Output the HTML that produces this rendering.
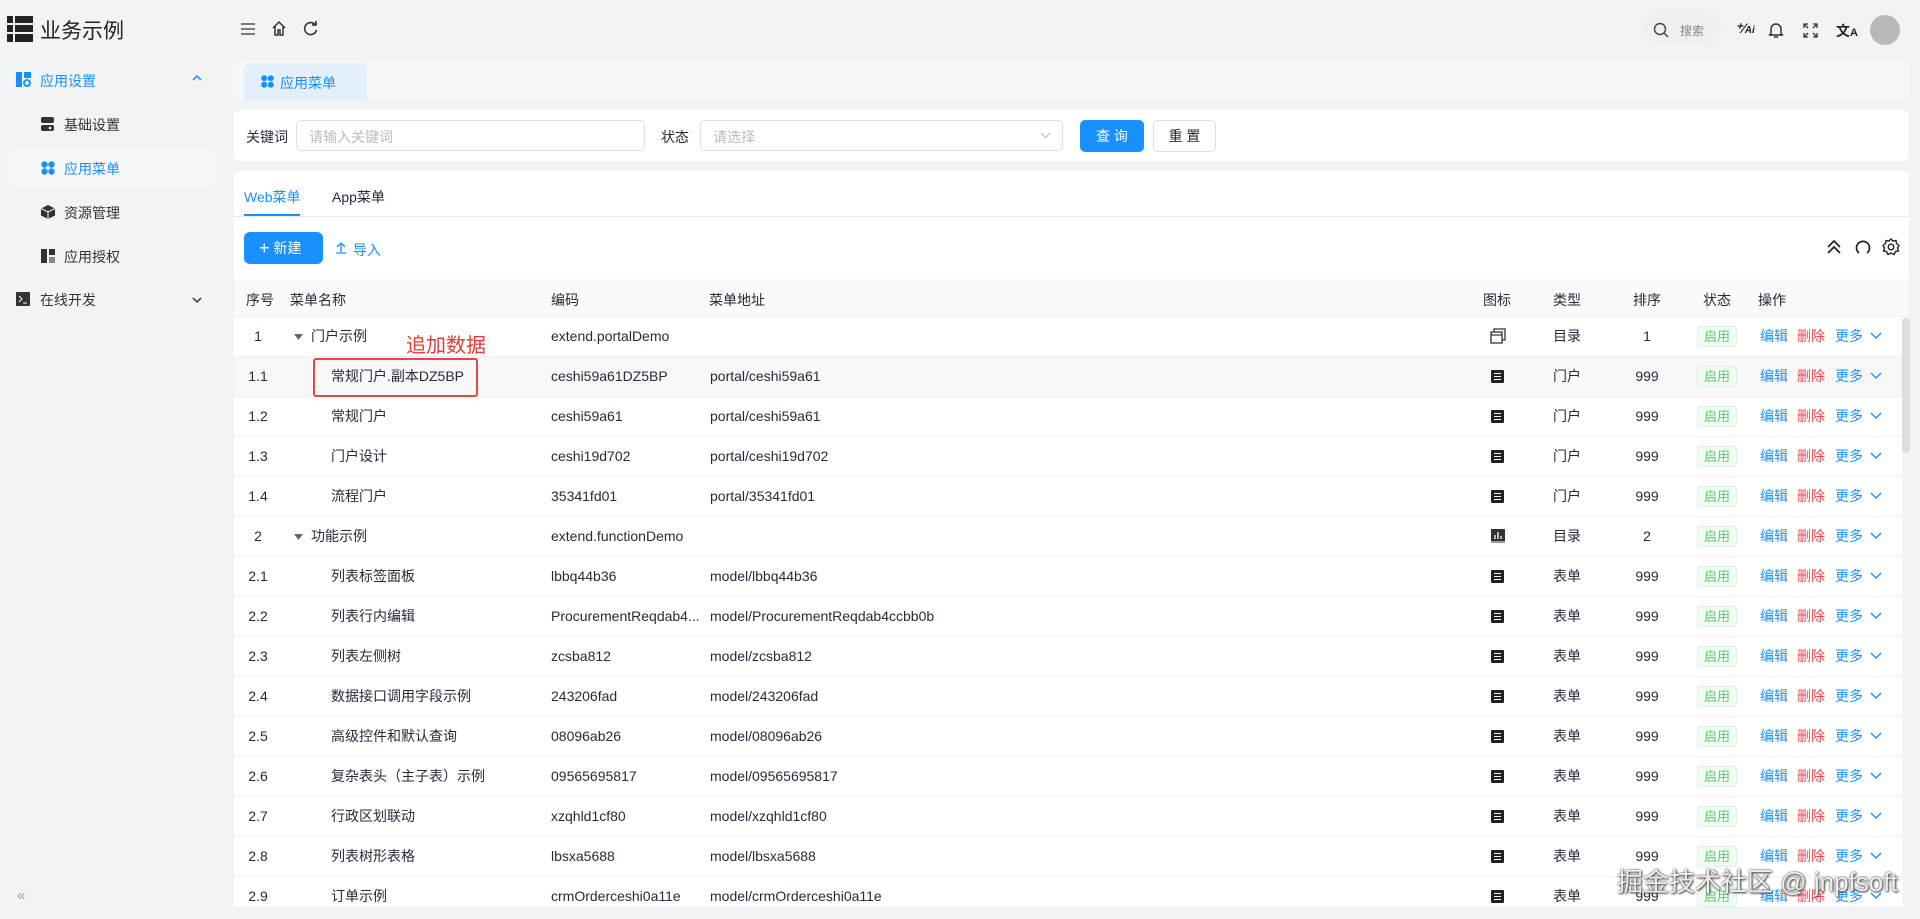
<!DOCTYPE html>
<html><head><meta charset="utf-8"><style>
*{box-sizing:border-box;margin:0;padding:0}
body{width:1920px;height:919px;overflow:hidden;background:#f2f3f5;font-family:"Liberation Sans","Noto Sans CJK SC",sans-serif;font-size:14px;color:#252b3a;position:relative}
.a{position:absolute;white-space:nowrap}
.side{color:#333;font-size:14px}
.blue{color:#1890ff}
.row{position:absolute;left:234px;width:1668px;height:40px;border-bottom:1px solid #eceef1;background:#fff}
.row .a{top:11px;line-height:16px}
.tag{position:absolute;left:1463px;top:9px;width:40px;height:21px;background:#f0fbf2;border:1px solid #d8f3de;border-radius:4px;color:#5cc870;font-size:13px;text-align:center;line-height:19px}
.ic{position:absolute;left:1257px;top:13px;width:13px;height:13px;background:#222;border-radius:1px}
.ic i{position:absolute;left:3px;width:7px;height:1px;background:#fff}
</style></head><body>
<svg class="a" style="left:7px;top:16px" width="26" height="26" viewBox="0 0 26 26"><g fill="#222"><rect x="0" y="0" width="6" height="7"/><rect x="8" y="0" width="18" height="7"/><rect x="0" y="9" width="6" height="7"/><rect x="8" y="9" width="18" height="7"/><rect x="0" y="18" width="6" height="8"/><rect x="8" y="18" width="18" height="8"/></g></svg>
<div class="a" style="left:40px;top:15px;font-size:21px;color:#222">业务示例</div>
<svg class="a" style="left:16px;top:72px" width="15" height="15"><rect x="0" y="0" width="6" height="15" fill="#1890ff"/><rect x="8" y="0" width="7" height="6" fill="#1890ff"/><circle cx="11" cy="11" r="3" fill="none" stroke="#1890ff" stroke-width="2"/></svg>
<div class="a blue" style="left:40px;top:71px">应用设置</div>
<svg class="a" style="left:192px;top:74px" width="10" height="8"><path d="M1 6L5 2L9 6" fill="none" stroke="#1890ff" stroke-width="1.5"/></svg>
<svg class="a" style="left:41px;top:117px" width="13" height="14"><rect x="0" y="0" width="13" height="6" rx="2" fill="#333"/><rect x="0" y="8" width="13" height="6" rx="2" fill="#333"/><circle cx="9" cy="11" r="1.3" fill="#fff"/></svg>
<div class="a side" style="left:64px;top:115px">基础设置</div>
<div class="a" style="left:9px;top:147px;width:205px;height:41px;background:#f6f7f9;border-radius:6px"></div>
<svg class="a" style="left:41px;top:161px" width="14" height="14"><g fill="#1890ff"><circle cx="3.5" cy="3.5" r="3.2"/><circle cx="10.5" cy="3.5" r="3.2"/><circle cx="3.5" cy="10.5" r="3.2"/><circle cx="10.5" cy="10.5" r="3.2"/></g></svg>
<div class="a blue" style="left:64px;top:159px">应用菜单</div>
<svg class="a" style="left:41px;top:205px" width="14" height="14"><path d="M7 0L14 3.5V10.5L7 14L0 10.5V3.5Z" fill="#333"/><path d="M0 3.5L7 7L14 3.5M7 7V14" stroke="#fff" fill="none"/></svg>
<div class="a side" style="left:64px;top:203px">资源管理</div>
<svg class="a" style="left:41px;top:249px" width="14" height="14"><rect x="0" y="0" width="6" height="14" fill="#333"/><rect x="8" y="0" width="6" height="6" fill="#333"/><rect x="8" y="8" width="6" height="6" fill="#888"/></svg>
<div class="a side" style="left:64px;top:247px">应用授权</div>
<svg class="a" style="left:16px;top:292px" width="14" height="14"><rect x="0" y="0" width="14" height="14" rx="1" fill="#333"/><path d="M3 4L6 7L3 10M7 11H11" stroke="#fff" fill="none"/></svg>
<div class="a side" style="left:40px;top:290px">在线开发</div>
<svg class="a" style="left:192px;top:296px" width="10" height="8"><path d="M1 2L5 6L9 2" fill="none" stroke="#333" stroke-width="1.5"/></svg>
<div class="a" style="left:17px;top:887px;color:#999;font-size:15px">«</div>
<svg class="a" style="left:241px;top:23px" width="14" height="12"><path d="M0 1H14M0 6H14M0 11H14" stroke="#555" stroke-width="1.5"/></svg>
<svg class="a" style="left:271px;top:20px" width="16" height="16"><path d="M2 8L8 2L14 8M4 6V15H7V10H9V15H12V6" fill="none" stroke="#333" stroke-width="1.5"/></svg>
<svg class="a" style="left:303px;top:21px" width="15" height="15"><path d="M12.5 4A6 6 0 1 0 13.5 9" fill="none" stroke="#333" stroke-width="1.6"/><path d="M9 4H13V0" fill="none" stroke="#333" stroke-width="1.6"/></svg>
<div class="a" style="left:1643px;top:12px;width:78px;height:34px;border-radius:17px;background:#eff0f2"></div>
<svg class="a" style="left:1653px;top:22px" width="16" height="16"><circle cx="7" cy="7" r="5.5" fill="none" stroke="#444" stroke-width="1.4"/><path d="M11 11L15 15" stroke="#444" stroke-width="1.4"/></svg>
<div class="a" style="left:1680px;top:22px;font-size:12px;color:#888">搜索</div>
<div class="a" style="left:1735px;top:20px;font-size:14px;color:#222;font-style:italic;font-weight:bold">⁺⁄<span style="font-size:10px">Ai</span></div>
<svg class="a" style="left:1768px;top:21px" width="16" height="18"><path d="M3 13V8A5 5 0 0 1 13 8V13L15 14H1Z" fill="none" stroke="#333" stroke-width="1.5"/><path d="M6 16H10" stroke="#333" stroke-width="1.5"/></svg>
<svg class="a" style="left:1803px;top:23px" width="15" height="15"><path d="M1 5V1H5M10 1H14V5M14 10V14H10M5 14H1V10M1 1L5 5M14 1L10 5M14 14L10 10M1 14L5 10" fill="none" stroke="#333" stroke-width="1.3"/></svg>
<div class="a" style="left:1836px;top:21px;font-size:14px;font-weight:bold;color:#222">文<span style="font-size:11px">A</span></div>
<div class="a" style="left:1870px;top:15px;width:30px;height:30px;border-radius:50%;background:#b8b8b8"></div>
<div class="a" style="left:234px;top:60px;width:1675px;height:40px;background:#f6f7f9"></div>
<div class="a" style="left:244px;top:63px;width:123px;height:37px;background:#e3effb;border-radius:8px 8px 0 0"></div>
<svg class="a" style="left:261px;top:75px" width="13" height="13"><g fill="#1890ff"><circle cx="3.2" cy="3.2" r="3"/><circle cx="9.8" cy="3.2" r="3"/><circle cx="3.2" cy="9.8" r="3"/><circle cx="9.8" cy="9.8" r="3"/></g></svg>
<div class="a blue" style="left:280px;top:73px;font-size:14px">应用菜单</div>
<div class="a" style="left:234px;top:110px;width:1675px;height:51px;background:#fff;border-radius:6px"></div>
<div class="a" style="left:246px;top:127px">关键词</div>
<div class="a" style="left:296px;top:120px;width:349px;height:31px;border:1px solid #dcdfe6;border-radius:5px"></div>
<div class="a" style="left:309px;top:127px;color:#bbb">请输入关键词</div>
<div class="a" style="left:661px;top:127px">状态</div>
<div class="a" style="left:700px;top:120px;width:363px;height:31px;border:1px solid #dcdfe6;border-radius:5px"></div>
<div class="a" style="left:713px;top:127px;color:#bbb">请选择</div>
<svg class="a" style="left:1040px;top:132px" width="11" height="7"><path d="M1 1L5.5 5.5L10 1" fill="none" stroke="#bbb" stroke-width="1.2"/></svg>
<div class="a" style="left:1080px;top:120px;width:64px;height:32px;background:#1890ff;border-radius:5px;color:#fff;text-align:center;line-height:32px">查 询</div>
<div class="a" style="left:1153px;top:120px;width:63px;height:32px;border:1px solid #dcdfe6;border-radius:5px;text-align:center;line-height:30px">重 置</div>
<div class="a" style="left:234px;top:171px;width:1675px;height:737px;background:#fff;border-radius:6px"></div>
<div class="a blue" style="left:244px;top:187px">Web菜单</div>
<div class="a" style="left:332px;top:187px">App菜单</div>
<div class="a" style="left:234px;top:216px;width:1675px;height:1px;background:#e5e7eb"></div>
<div class="a" style="left:244px;top:214px;width:56px;height:2px;background:#1890ff"></div>
<div class="a" style="left:244px;top:232px;width:79px;height:32px;background:#1890ff;border-radius:6px;color:#fff;line-height:32px;padding-left:15px"><span style="font-size:18px;vertical-align:-1px">+</span> 新建</div>
<svg class="a" style="left:335px;top:241px" width="12" height="13"><path d="M6 11V2M2 6L6 2L10 6M1 12H11" fill="none" stroke="#1890ff" stroke-width="1.3"/></svg>
<div class="a blue" style="left:353px;top:240px">导入</div>
<svg class="a" style="left:1826px;top:240px" width="16" height="14"><path d="M2 7L8 1L14 7M2 13L8 7L14 13" fill="none" stroke="#222" stroke-width="1.7"/></svg>
<svg class="a" style="left:1855px;top:239px" width="16" height="16"><path d="M4 14A6.5 6.5 0 1 1 12 14" fill="none" stroke="#222" stroke-width="1.7"/></svg>
<svg class="a" style="left:1882px;top:238px" width="18" height="18" viewBox="0 0 18 18"><path d="M9 1L11 3L14 2.5L14.5 5.5L17 7.5L15.5 10L16.5 13L13.5 13.5L12 16.5L9 15L6 16.5L4.5 13.5L1.5 13L2.5 10L1 7.5L3.5 5.5L4 2.5L7 3Z" fill="none" stroke="#222" stroke-width="1.4"/><circle cx="9" cy="9" r="2.8" fill="none" stroke="#222" stroke-width="1.4"/></svg>
<div class="a" style="left:234px;top:279px;width:1675px;height:38px;background:#fafafa;border-bottom:1px solid #eceef1"></div>
<div class="a" style="left:246px;top:290px">序号</div>
<div class="a" style="left:290px;top:290px">菜单名称</div>
<div class="a" style="left:551px;top:290px">编码</div>
<div class="a" style="left:709px;top:290px">菜单地址</div>
<div class="a" style="left:1483px;top:290px">图标</div>
<div class="a" style="left:1553px;top:290px">类型</div>
<div class="a" style="left:1633px;top:290px">排序</div>
<div class="a" style="left:1703px;top:290px">状态</div>
<div class="a" style="left:1758px;top:290px">操作</div>
<div id="rows"></div>
<div class="a" style="left:1902px;top:318px;width:8px;height:590px;background:#f4f4f5"></div>
<div class="a" style="left:1902px;top:318px;width:8px;height:135px;background:#dcdde0;border-radius:4px"></div>
<script>
var d=[["1","门户示例","extend.portalDemo","","d","目录","1",1],
["1.1","常规门户.副本DZ5BP","ceshi59a61DZ5BP","portal/ceshi59a61","l","门户","999"],
["1.2","常规门户","ceshi59a61","portal/ceshi59a61","l","门户","999"],
["1.3","门户设计","ceshi19d702","portal/ceshi19d702","l","门户","999"],
["1.4","流程门户","35341fd01","portal/35341fd01","l","门户","999"],
["2","功能示例","extend.functionDemo","","c","目录","2",1],
["2.1","列表标签面板","lbbq44b36","model/lbbq44b36","l","表单","999"],
["2.2","列表行内编辑","ProcurementReqdab4...","model/ProcurementReqdab4ccbb0b","l","表单","999"],
["2.3","列表左侧树","zcsba812","model/zcsba812","l","表单","999"],
["2.4","数据接口调用字段示例","243206fad","model/243206fad","l","表单","999"],
["2.5","高级控件和默认查询","08096ab26","model/08096ab26","l","表单","999"],
["2.6","复杂表头（主子表）示例","09565695817","model/09565695817","l","表单","999"],
["2.7","行政区划联动","xzqhld1cf80","model/xzqhld1cf80","l","表单","999"],
["2.8","列表树形表格","lbsxa5688","model/lbsxa5688","l","表单","999"],
["2.9","订单示例","crmOrderceshi0a11e","model/crmOrderceshi0a11e","l","表单","999"]];
var h="";
d.forEach(function(r,i){
var top=317+i*40;var hgt=i==14?31:40;
var ic=r[4]=="l"?'<div class="ic"><i style="top:3px"></i><i style="top:6px"></i><i style="top:9px"></i></div>':
r[4]=="c"?'<svg class="a" style="left:1257px;top:12px" width="14" height="14"><rect width="14" height="12" fill="#333"/><path d="M4 10V6M7 10V3M10 10V7" stroke="#fff" stroke-width="1.3"/><rect y="12" width="14" height="2" fill="#999"/></svg>':
'<svg class="a" style="left:1256px;top:11px" width="16" height="16"><rect x="1" y="4" width="11" height="11" fill="none" stroke="#333" stroke-width="1.3"/><path d="M1 7H12M4 4V1H15V12H12" fill="none" stroke="#333" stroke-width="1.3"/></svg>';
h+='<div class="row" style="top:'+top+'px;height:'+hgt+'px;overflow:hidden;'+(i==1?'background:#f8f8f9':'')+'">'+
'<div class="a" style="left:0;width:48px;text-align:center">'+r[0]+'</div>'+
(r[7]?'<svg class="a" style="left:60px;top:17px" width="9" height="6"><path d="M0 0H9L4.5 6Z" fill="#666"/></svg><div class="a" style="left:77px">'+r[1]+'</div>':'<div class="a" style="left:97px">'+r[1]+'</div>')+
'<div class="a" style="left:317px">'+r[2]+'</div><div class="a" style="left:476px">'+r[3]+'</div>'+ic+
'<div class="a" style="left:1319px">'+r[5]+'</div><div class="a" style="left:1363px;width:100px;text-align:center">'+r[6]+'</div>'+
'<div class="tag">启用</div><div class="a" style="left:1526px;color:#1890ff">编辑</div><div class="a" style="left:1563px;color:#f5484f">删除</div><div class="a" style="left:1601px;color:#1890ff">更多</div>'+
'<svg class="a" style="left:1636px;top:15px" width="12" height="8"><path d="M1 1L6 6L11 1" fill="none" stroke="#1890ff" stroke-width="1.4"/></svg></div>';
});
document.getElementById("rows").innerHTML=h;
</script>
<div class="a" style="left:406px;top:329px;font-size:20px;color:#e53935">追加数据</div>
<div class="a" style="left:313px;top:358px;width:165px;height:39px;border:2px solid #e04a3f;border-radius:3px"></div>
<div class="a" style="left:1617px;top:862px;font-size:26px;color:#eee;text-shadow:0 0 2px #444,1px 1px 2px #444">掘金技术社区 @ jnpfsoft</div>
</body></html>
